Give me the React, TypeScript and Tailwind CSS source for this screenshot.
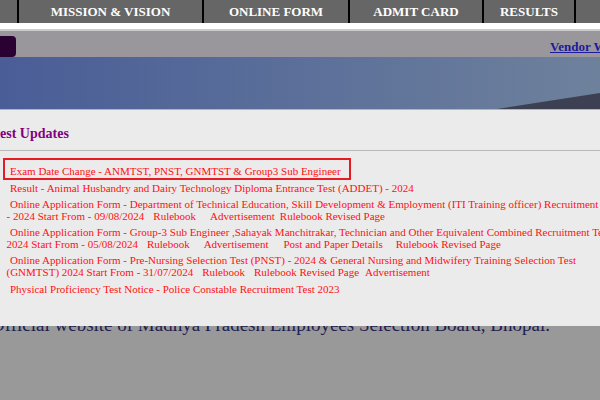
import React from "react";

const serif = { fontFamily: '"Liberation Serif", "Times New Roman", serif' };

function Gap({ w, children }: { w: string; children: React.ReactNode }) {
  return <span className={w}>{children}</span>;
}

export default function App() {
  return (
    <div
      className="w-[600px] h-[400px] overflow-hidden bg-[#999999] relative"
      style={serif}
    >
      {/* Top navigation */}
      <div className="flex h-[23px] bg-[#666666] text-white font-bold text-[13px] leading-none whitespace-nowrap">
        <div className="w-[17px] shrink-0" />
        <div className="w-[185px] shrink-0 border-l-2 border-black flex items-center justify-center pb-[1px]">
          MISSION &amp; VISION
        </div>
        <div className="w-[146px] shrink-0 border-l-2 border-black flex items-center justify-center pb-[1px]">
          ONLINE FORM
        </div>
        <div className="w-[134px] shrink-0 border-l-2 border-black flex items-center justify-center pb-[1px]">
          ADMIT CARD
        </div>
        <div className="w-[92px] shrink-0 border-l-2 border-black flex items-center justify-center pb-[1px]">
          RESULTS
        </div>
        <div className="flex-1 border-l-2 border-black" />
      </div>

      {/* white strip + line */}
      <div className="h-[6px] bg-white" />
      <div className="h-[2px] bg-[#cbcbcb]" />

      {/* grey bar */}
      <div className="h-[26px] bg-[#99979b] flex whitespace-nowrap">
        <div className="w-[16px] h-[21px] self-end bg-[#2b0033] rounded-r-[4px] shrink-0" />
        <a
          href="#"
          className="ml-[534px] pt-[9px] text-[13px] leading-[14px] font-bold text-[#1d1b9c] underline"
        >
          Vendor Website
        </a>
      </div>

      {/* banner */}
      <div className="relative h-[52px] bg-gradient-to-r from-[#4a5d97] to-[#6e819c]">
        <svg
          className="absolute inset-0"
          width="600"
          height="52"
          viewBox="0 0 600 52"
        >
          <polygon points="497,52 600,36 600,52" fill="#3c4052" />
        </svg>
      </div>
      <div className="h-[1px] bg-[#b4b4b4]" />

      {/* Latest updates panel */}
      <div className="relative z-10 -ml-[30px] w-[700px] h-[216px] bg-[#ebebeb]">
        <div className="pt-[16px] pb-[8px] pl-[9px] border-b border-[#b8b8b8] text-[14px] leading-[16px] font-bold text-[#800080]">
          Latest Updates
        </div>
        <div className="pt-[14.3px] pl-[36.5px] text-[11px] leading-[12px] text-[#ff1010] whitespace-nowrap">
          <div className="relative indent-[3.5px] mb-[4.3px]">
            <span className="absolute left-[-3.5px] top-[-7px] w-[348px] h-[22px] border-2 border-[#e51c23]" />
            Exam Date Change - ANMTST, PNST, GNMTST &amp; Group3 Sub Engineer
          </div>
          <div className="indent-[3.5px] mb-[4.3px]">
            Result - Animal Husbandry and Dairy Technology Diploma Entrance Test (ADDET) - 2024
          </div>
          <div className="indent-[3.5px] mb-[4.3px]">
            Online Application Form - Department of Technical Education, Skill Development &amp; Employment (ITI Training officer) Recruitment Test
            <br />
            <span>- 2024 Start From - 09/08/2024</span>
            <Gap w="ml-[9px]">Rulebook</Gap>
            <Gap w="ml-[14px]">Advertisement</Gap>
            <Gap w="ml-[5px]">Rulebook Revised Page</Gap>
          </div>
          <div className="indent-[3.5px] mb-[4.3px]">
            Online Application Form - Group-3 Sub Engineer ,Sahayak Manchitrakar, Technician and Other Equivalent Combined Recruitment Test -
            <br />
            <span>2024 Start From - 05/08/2024</span>
            <Gap w="ml-[9px]">Rulebook</Gap>
            <Gap w="ml-[14px]">Advertisement</Gap>
            <Gap w="ml-[15px]">Post and Paper Details</Gap>
            <Gap w="ml-[13px]">Rulebook Revised Page</Gap>
          </div>
          <div className="indent-[3.5px] mb-[4.3px]">
            Online Application Form - Pre-Nursing Selection Test (PNST) - 2024 &amp; General Nursing and Midwifery Training Selection Test
            <br />
            <span>(GNMTST) 2024 Start From - 31/07/2024</span>
            <Gap w="ml-[9px]">Rulebook</Gap>
            <Gap w="ml-[9px]">Rulebook Revised Page</Gap>
            <Gap w="ml-[6px]">Advertisement</Gap>
          </div>
          <div className="indent-[3.5px]">
            Physical Proficiency Test Notice - Police Constable Recruitment Test 2023
          </div>
        </div>
      </div>

      {/* text partly hidden under the panel */}
      <div className="-mt-[12px] -ml-[9px] text-[19px] leading-[22px] text-[#1e1e50] whitespace-nowrap">
        Official website of Madhya Pradesh Employees Selection Board, Bhopal.
      </div>
    </div>
  );
}
